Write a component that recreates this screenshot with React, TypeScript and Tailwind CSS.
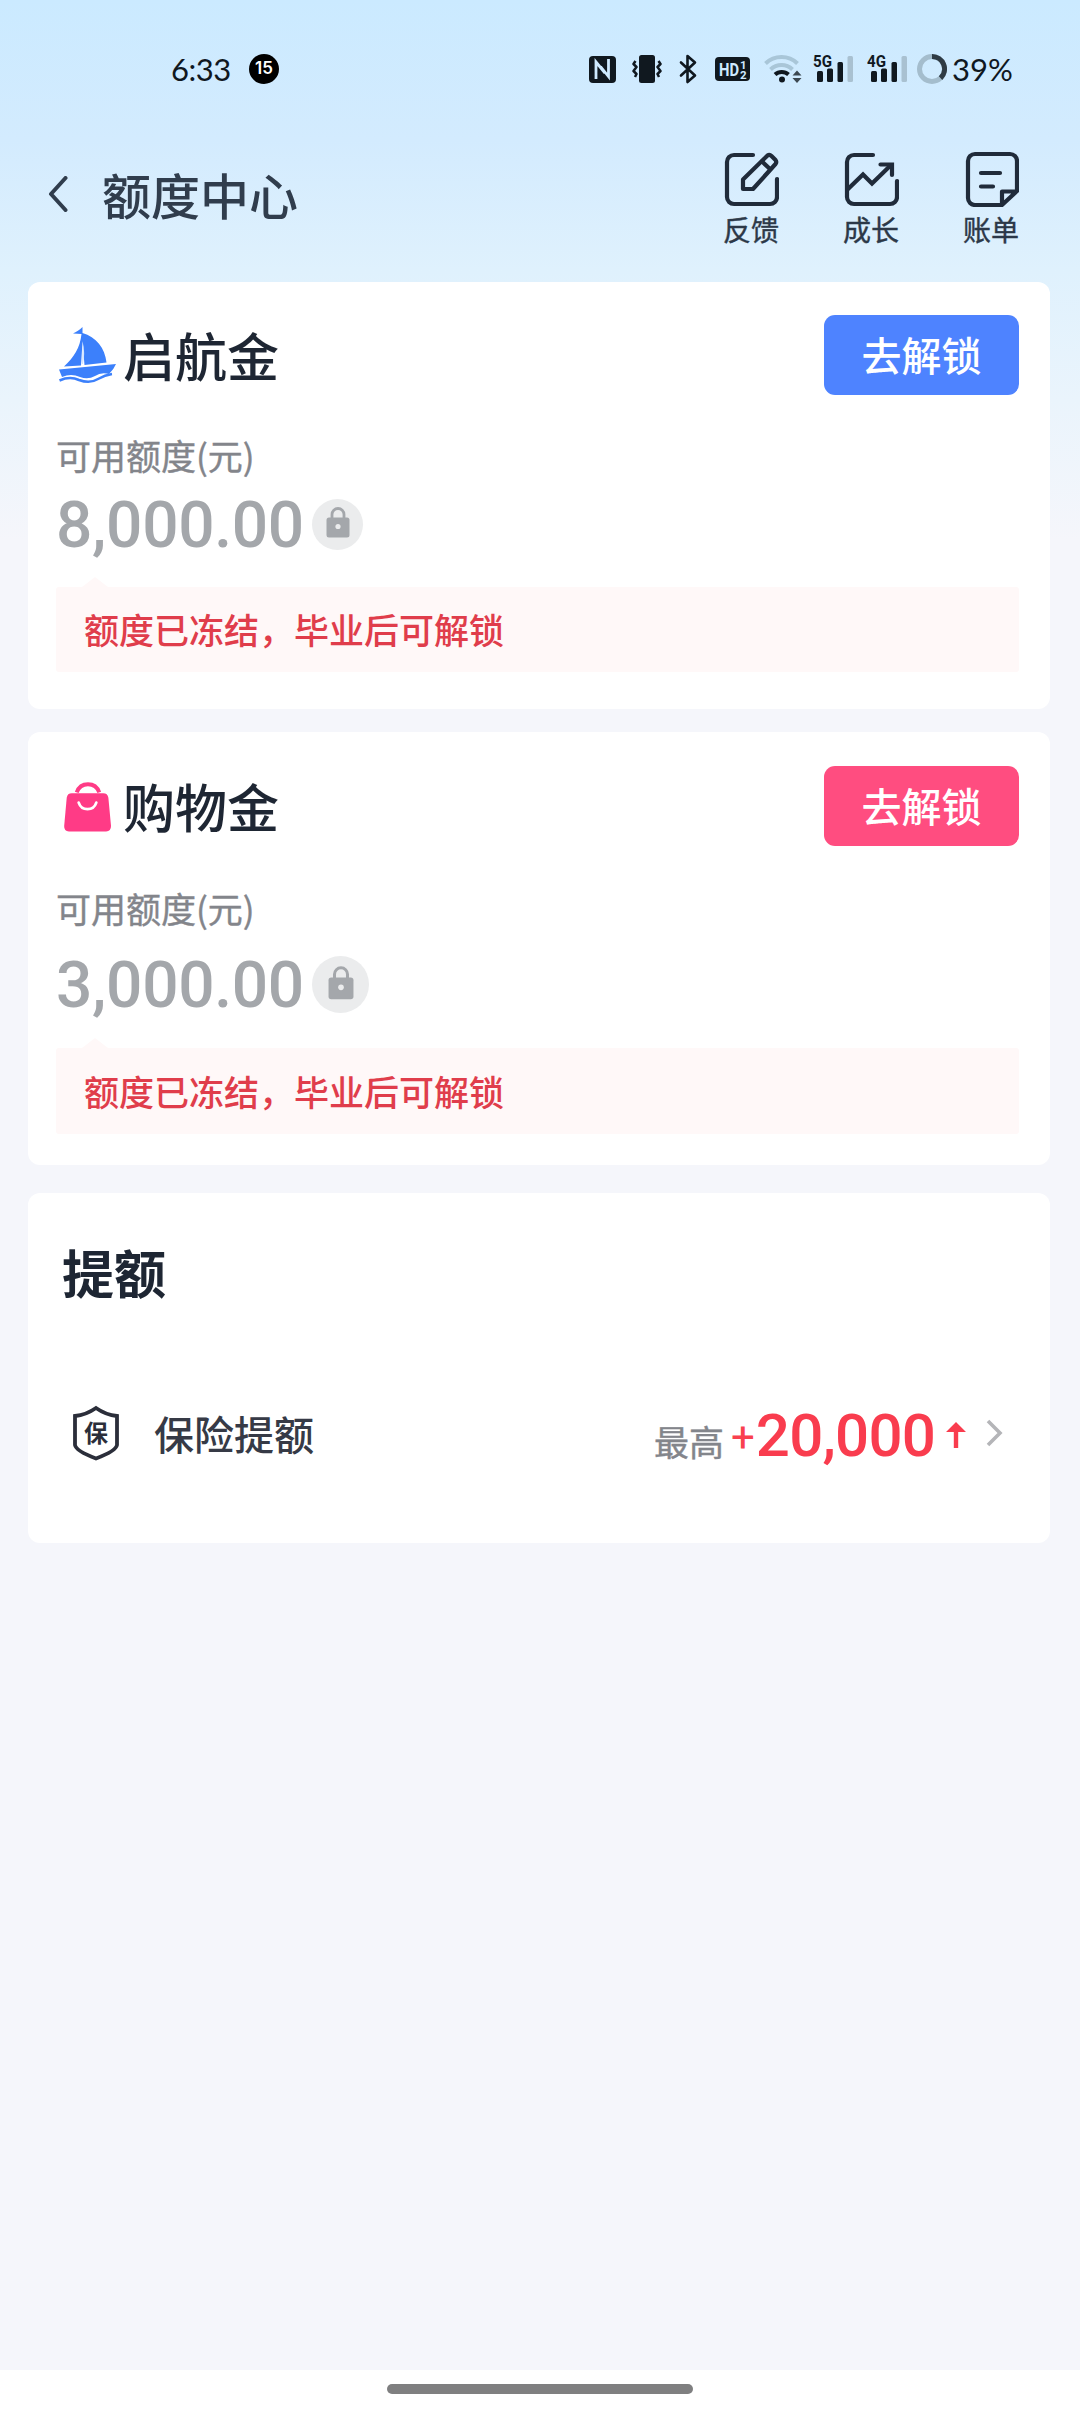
import type { ReactNode } from "react";

const CJK = "font-['Noto_Sans_CJK_SC','Liberation_Sans',sans-serif]";

function Signal({ label }: { label: string }) {
  return (
    <svg width="42" height="40" viewBox="0 -5 42 40" fill="#10181f">
      <text x="0" y="13" fontSize="17" fontWeight="700" fontFamily="Roboto, sans-serif" textLength="19" lengthAdjust="spacingAndGlyphs">
        {label}
      </text>
      <rect x="4" y="17" width="6" height="11" rx="1.5" />
      <rect x="14" y="14.500" width="6" height="13.500" rx="1.5" />
      <rect x="24.500" y="8" width="5.500" height="20" rx="1.500" />
      <rect x="34.500" y="2" width="5.500" height="26" rx="1.500" fill="#a9c1d1" />
    </svg>
  );
}

function StatusBar() {
  return (
    <div className="flex h-[138px] items-center pl-[171px] font-[Lato,sans-serif] text-[#10181f]">
      <span className="w-[78px] text-[31px] leading-[38px] tracking-[-0.5px]">6:33</span>
      <span className="flex size-[30px] items-center justify-center rounded-full bg-black font-[Inter,sans-serif] text-[17px] font-semibold text-white">
        15
      </span>
      <svg className="ml-[310px]" width="27" height="27" viewBox="0 0 27 27">
        <rect width="27" height="27" rx="4" fill="#10181f" />
        <path d="M7 23V6L16 17M11.500 10.500L19.500 20.500V3" fill="none" stroke="#cfeaff" strokeWidth="2.800" />
      </svg>
      <svg className="ml-[16px]" width="30" height="30" viewBox="0 0 30 30" fill="none" stroke="#10181f" strokeWidth="2.5">
        <rect x="7" y="1" width="16" height="28" rx="2.500" fill="#10181f" stroke="none" />
        <path d="M3.500 7l-2 3 3 3-3 4 3 3-1.500 3M26.500 7l2 3-3 3 3 4-3 3 1.500 3" strokeLinejoin="round" />
      </svg>
      <svg className="ml-[17px]" width="18" height="30" viewBox="0 0 18 30" fill="none" stroke="#10181f" strokeWidth="2.600" strokeLinejoin="round" strokeLinecap="round">
        <path d="M2 8.500l14 13-7.500 6.500V2L16 8.500 2 21.500" />
      </svg>
      <svg className="ml-[18px]" width="35" height="26" viewBox="0 0 35 26">
        <rect y="1" width="35" height="24" rx="4" fill="#10181f" />
        <g fill="#cfeaff" fontFamily="Roboto, sans-serif" fontWeight="700">
          <text x="4" y="20" fontSize="18" textLength="20" lengthAdjust="spacingAndGlyphs">HD</text>
          <text x="25" y="12.500" fontSize="11.500">1</text>
          <text x="25" y="22.500" fontSize="11.500">2</text>
        </g>
      </svg>
      <svg className="ml-[14px]" width="40" height="30" viewBox="0 0 40 30" fill="none" strokeWidth="4">
        <path d="M1.500 9.500a23 23 0 0 1 32 0" stroke="#a9c6d8" />
        <path d="M6.500 15.500a16 16 0 0 1 22 0" stroke="#a9c6d8" />
        <path d="M11 20.500a10 10 0 0 1 13.500 0" stroke="#10181f" />
        <circle cx="18" cy="25.500" r="3" fill="#10181f" />
        <path d="M28.500 21.500l4.500-5 4.500 5zM28.500 24l4.500 5 4.500-5z" fill="#3c4851" />
      </svg>
      <span className="ml-[9px] flex gap-[12px]">
        <Signal label="5G" />
        <Signal label="4G" />
      </span>
      <svg className="ml-[8px]" width="30" height="30" viewBox="0 0 30 30" fill="none" strokeWidth="5">
        <circle cx="15" cy="15" r="12.500" stroke="#a4bdcd" />
        <path d="M15 2.500a12.500 12.500 0 0 1 8.600 21.600" stroke="#2f3b44" />
      </svg>
      <span className="ml-[5px] text-[31px] leading-[38px]">39%</span>
    </div>
  );
}

function HeaderAction({ label, children }: { label: string; children: ReactNode }) {
  return (
    <div className="flex w-[56px] flex-col items-center">
      <svg width="56" height="56" viewBox="0 0 56 56" fill="none" stroke="#202b3a" strokeWidth="4.200" strokeLinecap="round">
        {children}
      </svg>
      <span className="mt-2 whitespace-nowrap text-[28px] leading-[28px] text-[#2c3848] [-webkit-text-stroke:0.4px_#2c3848]">{label}</span>
    </div>
  );
}

function Header() {
  return (
    <header className="flex h-[144px] items-start pl-[48px]">
      <div className="flex h-[112px] items-center">
        <svg width="20" height="36" viewBox="0 0 20 36" fill="none" stroke="#303d4d" strokeWidth="4" strokeLinecap="round" strokeLinejoin="round">
          <path d="M17.500 2L3 18l14.500 16" />
        </svg>
        <h1 className="ml-[34px] text-[49px] leading-[60px] font-medium text-[#303d4d]">额度中心</h1>
      </div>
      <div className="mr-[61px] ml-auto flex gap-[64px] pt-[13px]">
        <HeaderAction label="反馈">
          <path d="M30 4H11a7 7 0 0 0-7 7v35a7 7 0 0 0 7 7h36a7 7 0 0 0 7-7V28" />
          <path d="M20 38v-9.500L44.500 4.500Q46.500 3 48.500 5l4 4Q54 11 52.500 13L30 38z" strokeLinejoin="round" />
          <path d="M39 10.500l8 7.500" />
        </HeaderAction>
        <HeaderAction label="成长">
          <path d="M30 4H11a7 7 0 0 0-7 7v35a7 7 0 0 0 7 7h36a7 7 0 0 0 7-7V30" />
          <path d="M4 39L20 23.500 29 32.500 48 14" strokeLinecap="butt" />
          <path d="M37.500 13.500H49V24" />
        </HeaderAction>
        <HeaderAction label="账单">
          <path d="M37 54H12a7 7 0 0 1-7-7V10a7 7 0 0 1 7-7h35a7 7 0 0 1 7 7v30L39 54V40.500h14" strokeLinejoin="round" />
          <path d="M18 22h19M18 35.500h12" />
        </HeaderAction>
      </div>
    </header>
  );
}

function Lock({ size, glyph }: { size: string; glyph: string }) {
  return (
    <span className={`ml-[9px] flex items-center justify-center rounded-full bg-[#ebeced] pb-1 ${size}`}>
      <svg className={glyph} viewBox="0 0 24 31" fill="none">
        <path d="M6 12V7.500a6 6 0 0 1 12 0V12" stroke="#a4a7ab" strokeWidth="2.800" />
        <rect x="0.500" y="10.500" width="23" height="20" rx="2.500" fill="#a4a7ab" />
        <circle cx="12" cy="19.500" r="2.600" fill="#ebeced" />
      </svg>
    </span>
  );
}

function Amount({ value }: { value: string }) {
  return (
    <span className="w-[247px] pt-[3px] font-[Roboto,sans-serif] text-[64px] leading-[52px] font-medium tracking-[-0.300px] text-[#a4a7ab]">
      {value}
    </span>
  );
}

function Notice({ className }: { className: string }) {
  return (
    <div className={`relative flex items-center rounded-[3px] bg-[#fff8f8] pl-[28px] ${className}`}>
      <svg className="absolute -top-[10px] left-[26px]" width="26" height="10" viewBox="0 0 26 10">
        <path d="M0 10L13 0l13 10z" fill="#fff8f8" />
      </svg>
      <span className="text-[35px] leading-[40px] font-medium text-[#e03d4b]">额度已冻结，毕业后可解锁</span>
    </div>
  );
}

function CardHead({ icon, title, button }: { icon: ReactNode; title: string; button: string }) {
  return (
    <div className="flex h-[80px] items-center">
      <span className="flex w-[67px] items-center">{icon}</span>
      <h2 className="-mt-px text-[52px] leading-[60px] font-medium text-[#1e2633]">{title}</h2>
      <button className={`ml-auto h-[80px] w-[195px] rounded-[11px] pb-[2px] text-[40px] leading-[60px] font-medium text-white ${button}`}>
        去解锁
      </button>
    </div>
  );
}

function Boat() {
  return (
    <svg className="ml-[2px]" width="60" height="58" viewBox="0 0 60 58" fill="#3c80fb">
      <path d="M24.500 1v6C38 11 47 22 48.500 36.500L26.500 39 24.500 16 23 39.500 6 40.500C16 31 22 22 23.500 8L15 7.500C18 6 22 4 24.500 1z" />
      <path d="M24.500 15Q27.500 27 25 38H24Z" fill="#d3e5ff" />
      <path d="M1 43.500L58 38Q56 43 51 48 43 46 37 50 30 54 22 51 13 47 4 51z" />
      <path d="M1.500 54.500Q12 50 21 54 32 58 40 53 47 49 54 48" fill="none" stroke="#3c80fb" strokeWidth="2.500" />
    </svg>
  );
}

function Bag() {
  return (
    <svg className="mt-[2px] ml-[7px]" width="49" height="52" viewBox="0 0 50 52">
      <path d="M14 11C18 0 33 0 37 11" fill="none" stroke="#ff3b86" strokeWidth="4" />
      <path d="M9 12h32q4.500 0 5.300 4.500L49 45.500Q49 51 44 51H6Q1 51 1.200 45.500L3.800 16.500Q4.500 12 9 12z" fill="#ff3b86" />
      <path d="M16 21.500c3 9 15 9 18 0" fill="none" stroke="#fff" strokeWidth="2.800" strokeLinecap="round" />
    </svg>
  );
}

function Shield() {
  return (
    <svg className="ml-[16px]" width="48" height="56" viewBox="0 0 48 56">
      <path d="M24 3Q34 10 45 11V40Q44 46 24 53.500 4 46 3 40V11Q14 10 24 3z" fill="none" stroke="#2b2e3a" strokeWidth="3.800" />
      <text x="24" y="37" textAnchor="middle" fontSize="24" fontWeight="700" fill="#2b2e3a">保</text>
    </svg>
  );
}

export default function App() {
  return (
    <div className={`flex h-[2412px] w-[1080px] flex-col bg-[#f5f6fb] bg-[linear-gradient(180deg,#cbeaff_0px,#d3ebfe_140px,#dff1fd_270px,#eaf4fc_400px,#f5f6fb_540px)] ${CJK}`}>
      <StatusBar />
      <Header />
      <main className="flex flex-col pr-[30px] pl-[28px]">
        <section className="h-[427px] rounded-[12px] bg-white pt-[33px] pr-[31px] pl-[28px]">
          <CardHead icon={<Boat />} title="启航金" button="bg-[#4e83ff]" />
          <p className="mt-[40px] text-[35px] leading-[40px] text-[#83858b] [-webkit-text-stroke:0.4px_#83858b]">可用额度(元)</p>
          <div className="mt-[23px] flex h-[52px] items-center">
            <Amount value="8,000.00" />
            <Lock size="size-[51px]" glyph="h-[31px] w-[24px]" />
          </div>
          <Notice className="mt-[37px] h-[85px] pb-px" />
        </section>

        <section className="mt-[23px] h-[433px] rounded-[12px] bg-white pt-[34px] pr-[31px] pl-[28px]">
          <CardHead icon={<Bag />} title="购物金" button="bg-[#ff4d80]" />
          <p className="mt-[42px] text-[35px] leading-[40px] text-[#83858b] [-webkit-text-stroke:0.4px_#83858b]">可用额度(元)</p>
          <div className="mt-[28px] flex h-[57px] items-center">
            <Amount value="3,000.00" />
            <Lock size="size-[57px]" glyph="h-[34px] w-[26px]" />
          </div>
          <Notice className="mt-[35px] h-[86px]" />
        </section>

        <section className="mt-[28px] h-[350px] rounded-[12px] bg-white pt-[49px] pr-[47px] pl-[28px]">
          <h2 className="ml-[6px] text-[52px] leading-[60px] font-bold text-[#1e2633]">提额</h2>
          <div className="mt-[101px] flex h-[60px] items-center">
            <Shield />
            <span className="ml-[34px] text-[40px] leading-[60px] font-medium text-[#363a46]">保险提额</span>
            <div className="ml-auto flex items-baseline pt-[12px]">
              <span className="text-[35px] leading-[60px] text-[#83858b] [-webkit-text-stroke:0.4px_#83858b]">最高</span>
              <span className="relative -top-[4px] ml-[7px] font-[Roboto,sans-serif] text-[42px] leading-[60px] text-[#f9404f]">+</span>
              <span className="ml-px font-[Roboto,sans-serif] text-[60px] leading-[60px] font-medium tracking-[-0.800px] text-[#f93c4e]">20,000</span>
            </div>
            <svg className="mt-[4px] ml-[11px]" width="20" height="26" viewBox="0 0 20 26" fill="#f93c4e">
              <path d="M10 0l10 10H12.200V26H7.800V10H0z" />
            </svg>
            <svg className="ml-[20px]" width="17" height="28" viewBox="0 0 17 28" fill="none" stroke="#b4b5b8" strokeWidth="3.600">
              <path d="M2 2l12 12L2 26" />
            </svg>
          </div>
        </section>
      </main>

      <footer className="mt-auto flex h-[42px] justify-center bg-white pt-[14px]">
        <div className="h-[10px] w-[306px] rounded-full bg-[#7f7f80]" />
      </footer>
    </div>
  );
}
